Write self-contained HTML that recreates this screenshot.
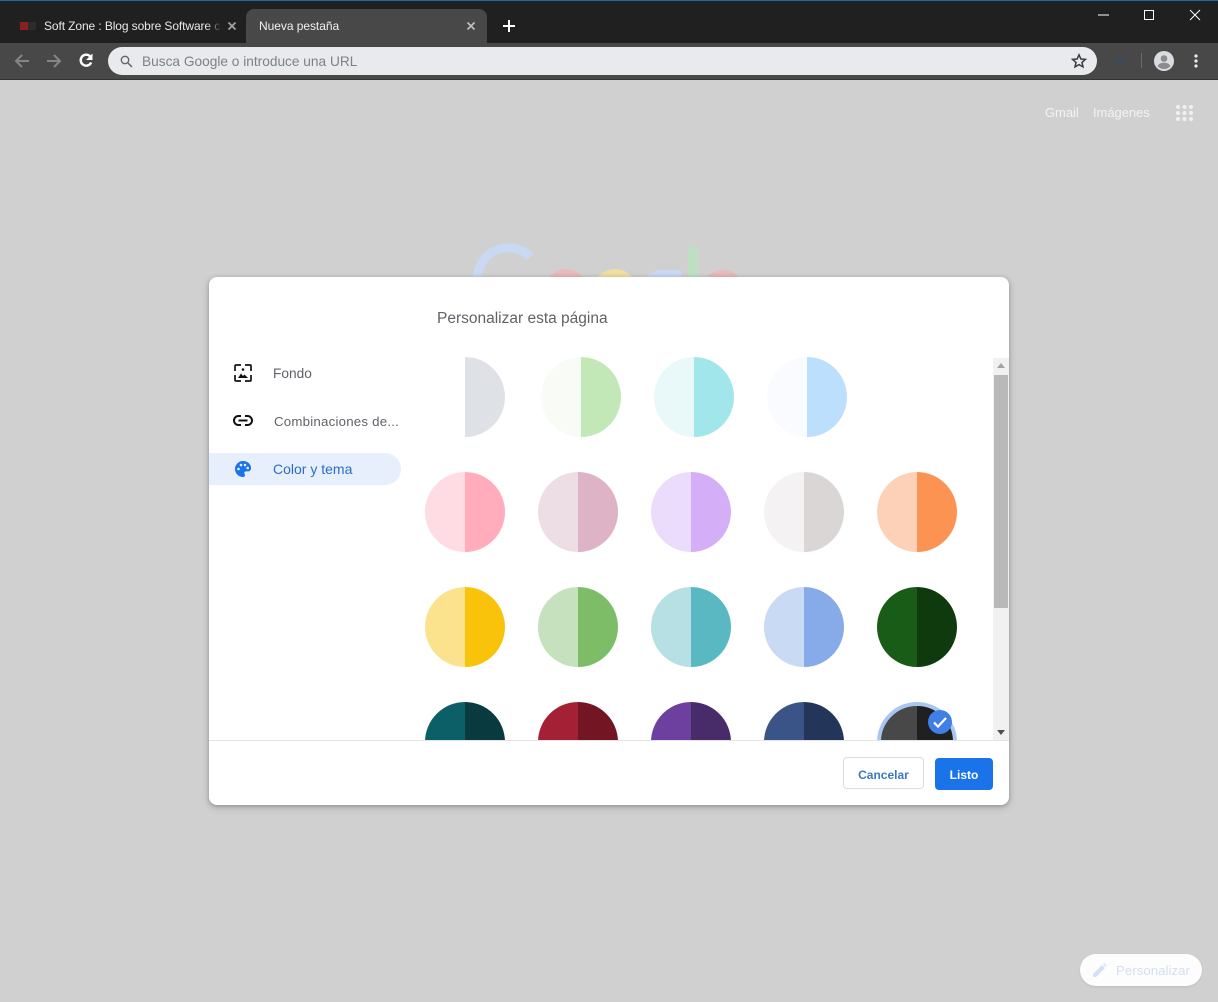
<!DOCTYPE html>
<html lang="es"><head><meta charset="utf-8"><title>Nueva pestaña</title>
<style>
html,body{margin:0;padding:0}
body{width:1218px;height:1002px;overflow:hidden;position:relative;background:#d0d0d0;font-family:"Liberation Sans",sans-serif}
.a{position:absolute;white-space:nowrap}
svg{position:absolute;overflow:visible}
.c{position:absolute;width:80px;height:80px;border-radius:50%}
</style></head><body>
<div class="a" style="left:0;top:0;width:1218px;height:44px;background:#202020"></div>
<div class="a" style="left:0;top:0;width:1218px;height:1px;background:#1c6aa8"></div>
<div class="a" style="left:0;top:43px;width:1218px;height:37px;background:#484848"></div>
<div class="a" style="left:0;top:79px;width:1218px;height:1px;background:#333"></div>
<div class="a" style="left:246px;top:9px;width:241px;height:35px;background:#484848;border-radius:8px 8px 0 0"></div>
<div class="a" style="left:20px;top:22px;width:8px;height:8px;background:#8a1f20"></div>
<div class="a" style="left:28px;top:22px;width:8px;height:8px;background:#2c2c2c"></div>
<div class="a" style="left:44px;top:18px;width:176px;overflow:hidden;font-size:12px;line-height:16px;letter-spacing:-.1px;color:#e8e8e8">Soft Zone : Blog sobre Software c</div>
<div class="a" style="left:206px;top:16px;width:16px;height:20px;background:linear-gradient(90deg,rgba(32,32,32,0),#202020)"></div>
<div class="a" style="left:259px;top:18px;font-size:12px;line-height:16px;letter-spacing:-.05px;color:#f0f0f0">Nueva pestaña</div>
<svg style="left:228px;top:22px" width="8" height="8"><path d="M.5.5l7 7M7.500.5l-7 7" stroke="#a8a8a8" stroke-width="1.600" fill="none"/></svg>
<svg style="left:467px;top:22px" width="8" height="8"><path d="M.5.5l7 7M7.500.5l-7 7" stroke="#c0c0c0" stroke-width="1.600" fill="none"/></svg>
<svg style="left:503px;top:20px" width="12" height="12"><path d="M6 0v12M0 6h12" stroke="#fff" stroke-width="2" fill="none"/></svg>
<svg style="left:1098px;top:14px" width="11" height="2"><path d="M0 1h11" stroke="#fff" stroke-width="1"/></svg>
<svg style="left:1144px;top:10px" width="10" height="10"><rect x=".5" y=".5" width="9" height="9" fill="none" stroke="#fff"/></svg>
<svg style="left:1190px;top:10px" width="10" height="10"><path d="M0 0l10 10M10 0L0 10" stroke="#fff" stroke-width="1" fill="none"/></svg>
<svg style="left:14px;top:53px" width="16" height="16"><path d="M15 8H2M8 2L2 8l6 6" stroke="#858585" stroke-width="2" fill="none"/></svg>
<svg style="left:46px;top:53px" width="16" height="16"><path d="M1 8h13M8 2l6 6-6 6" stroke="#858585" stroke-width="2" fill="none"/></svg>
<svg style="left:78px;top:52px" width="16" height="16" viewBox="0 0 16 16"><path d="M13.200 10.500A5.500 5.500 0 1 1 12 4.200" stroke="#fff" stroke-width="2.400" fill="none"/><path d="M14.500 1.500v6.500h-6.500z" fill="#fff"/></svg>
<div class="a" style="left:108px;top:47px;width:989px;height:28px;border-radius:14px;background:#e8eaed"></div>
<svg style="left:120px;top:55px" width="13" height="13"><circle cx="5" cy="5" r="3.700" stroke="#5f6368" stroke-width="1.300" fill="none"/><path d="M8 8l4 4" stroke="#5f6368" stroke-width="1.500"/></svg>
<div class="a" style="left:142px;top:54px;font-size:13.700px;line-height:16px;color:#7d8186">Busca Google o introduce una URL</div>
<svg style="left:1071px;top:53px" width="16" height="16" viewBox="0 0 16 16"><path d="M8 1.800l1.900 4.200 4.500.4-3.400 3 1 4.500L8 11.600l-4 2.300 1-4.500-3.400-3 4.500-.4z" fill="none" stroke="#3c3c3c" stroke-width="1.500"/></svg>
<svg style="left:1111px;top:53px" width="16" height="15" viewBox="0 0 16 15"><path d="M8 2L2 12h3l3-5 3 5h3z" fill="#3c4a5c"/></svg>
<div class="a" style="left:1141px;top:53px;width:1px;height:15px;background:#6a6a6a"></div>
<svg style="left:1154px;top:51px" width="20" height="20" viewBox="0 0 20 20"><circle cx="10" cy="10" r="10" fill="#dadce0"/><circle cx="10" cy="7.500" r="3.300" fill="#8a8c90"/><path d="M3.500 15c1.500-2.500 4-3.200 6.500-3.200s5 .7 6.500 3.200a8.500 8.500 0 0 1-13 0z" fill="#8a8c90"/></svg>
<svg style="left:1194px;top:54px" width="4" height="14"><circle cx="2" cy="2" r="1.600" fill="#eee"/><circle cx="2" cy="7" r="1.600" fill="#eee"/><circle cx="2" cy="12" r="1.600" fill="#eee"/></svg>
<div class="a" style="left:1045px;top:105px;font-size:13px;line-height:16px;letter-spacing:-.05px;color:#f3f3f3">Gmail</div>
<div class="a" style="left:1093px;top:105px;font-size:13px;line-height:16px;letter-spacing:-.05px;color:#f3f3f3">Imágenes</div>
<svg style="left:1176px;top:105px" width="17" height="16" fill="#f0f0f0"><circle cx="2" cy="2" r="2"/><circle cx="8.500" cy="2" r="2"/><circle cx="15" cy="2" r="2"/><circle cx="2" cy="8" r="2"/><circle cx="8.500" cy="8" r="2"/><circle cx="15" cy="8" r="2"/><circle cx="2" cy="14" r="2"/><circle cx="8.500" cy="14" r="2"/><circle cx="15" cy="14" r="2"/></svg>
<svg style="left:460px;top:238px" width="300" height="45">
<path d="M17 45C17 22 32 10 48 10c9 0 17 3 22 9" fill="none" stroke="#c9d8f3" stroke-width="9"/>
<circle cx="106" cy="53" r="22" fill="#e8baba"/>
<circle cx="155" cy="53" r="22" fill="#f1dea3"/>
<circle cx="202" cy="53" r="21" fill="#c9d8f3"/><rect x="205" y="32" width="17" height="10" rx="3" fill="#c9d8f3"/>
<rect x="228" y="9" width="10" height="36" fill="#bde0c3"/>
<circle cx="263" cy="53" r="21" fill="#e8baba"/>
</svg>
<div class="a" style="left:209px;top:277px;width:800px;height:528px;border-radius:8px;background:#fff;box-shadow:0 1px 4px rgba(60,64,67,.35),0 3px 8px rgba(60,64,67,.18);overflow:hidden">
<div class="a" style="left:228px;top:33px;font-size:15.500px;line-height:18px;color:#5f6368">Personalizar esta página</div>
<div class="a" style="left:0;top:176px;width:192px;height:32px;background:#e6effb;border-radius:0 16px 16px 0"></div>
<svg style="left:25px;top:87px" width="18" height="18" viewBox="0 0 18 18"><path d="M7 1H2a1 1 0 0 0-1 1v5M11 1h5a1 1 0 0 1 1 1v5M17 11v5a1 1 0 0 1-1 1h-5M7 17H2a1 1 0 0 1-1-1v-5" fill="none" stroke="#111" stroke-width="1.700"/><path d="M4 14l3-4.500 2 2.500 1.500-1.500L14 14z" fill="#111"/><circle cx="9" cy="5.500" r="1.300" fill="#111"/></svg>
<svg style="left:24px;top:138px" width="20" height="12" viewBox="0 0 20 12"><path d="M8 1H5.500a4.500 4.500 0 0 0 0 9H8M12 1h2.500a4.500 4.500 0 0 1 0 9H12M5.500 5.500h9" fill="none" stroke="#111" stroke-width="2"/></svg>
<svg style="left:25px;top:183px" width="18" height="18" viewBox="0 0 18 18"><path d="M9 1a8 8 0 0 0 0 16c1.300 0 2-.9 2-1.800 0-1-.7-1.300-.7-2.200 0-1 .8-1.600 1.800-1.600H14c2 0 3-1.500 3-3.400C17 3.800 13.400 1 9 1z" fill="#1a73e8"/><circle cx="4.500" cy="9" r="1.300" fill="#e6effb"/><circle cx="7" cy="5" r="1.300" fill="#e6effb"/><circle cx="11" cy="5" r="1.300" fill="#e6effb"/><circle cx="13.700" cy="8" r="1.300" fill="#e6effb"/></svg>
<div class="a" style="left:64px;top:89px;font-size:13.700px;line-height:16px;color:#5f6368">Fondo</div>
<div class="a" style="left:65px;top:137px;font-size:13.300px;line-height:16px;color:#5f6368;letter-spacing:.2px">Combinaciones de...</div>
<div class="a" style="left:64px;top:184px;font-size:14px;line-height:16px;color:#2a6dc9">Color y tema</div>
<div class="a" style="left:0;top:80px;width:784px;height:383px;overflow:hidden">
<div class="c" style="left:216px;top:0;background:linear-gradient(90deg,#fff 50%,#dee1e6 50%)"></div>
<div class="c" style="left:332px;top:0;background:linear-gradient(90deg,#f8fbf6 50%,#c2e8b8 50%)"></div>
<div class="c" style="left:445px;top:0;background:linear-gradient(90deg,#e9f8f9 50%,#a0e6ea 50%)"></div>
<div class="c" style="left:558px;top:0;background:linear-gradient(90deg,#f9fbfe 50%,#bcdffd 50%)"></div>
<div class="c" style="left:216px;top:115px;background:linear-gradient(90deg,#ffdce3 50%,#ffadbc 50%)"></div>
<div class="c" style="left:329px;top:115px;background:linear-gradient(90deg,#eddde4 50%,#deb3c5 50%)"></div>
<div class="c" style="left:442px;top:115px;background:linear-gradient(90deg,#ebdcfb 50%,#d4aff8 50%)"></div>
<div class="c" style="left:555px;top:115px;background:linear-gradient(90deg,#f4f2f2 50%,#dad6d5 50%)"></div>
<div class="c" style="left:668px;top:115px;background:linear-gradient(90deg,#fdd1b8 50%,#fc9353 50%)"></div>
<div class="c" style="left:216px;top:230px;background:linear-gradient(90deg,#fbe38e 50%,#f8c30a 50%)"></div>
<div class="c" style="left:329px;top:230px;background:linear-gradient(90deg,#c6e1bd 50%,#7dbd67 50%)"></div>
<div class="c" style="left:442px;top:230px;background:linear-gradient(90deg,#b6e0e4 50%,#59b8c2 50%)"></div>
<div class="c" style="left:555px;top:230px;background:linear-gradient(90deg,#c9daf5 50%,#86abe8 50%)"></div>
<div class="c" style="left:668px;top:230px;background:linear-gradient(90deg,#185c18 50%,#0e3a0e 50%)"></div>
<div class="c" style="left:216px;top:345px;background:linear-gradient(90deg,#0c5f66 50%,#083a40 50%)"></div>
<div class="c" style="left:329px;top:345px;background:linear-gradient(90deg,#a42035 50%,#731522 50%)"></div>
<div class="c" style="left:442px;top:345px;background:linear-gradient(90deg,#6d3f9e 50%,#482b69 50%)"></div>
<div class="c" style="left:555px;top:345px;background:linear-gradient(90deg,#3a5488 50%,#233558 50%)"></div>
<div class="c" style="left:668px;top:345px;box-sizing:border-box;border:4px solid #a9c6f1;background:linear-gradient(90deg,#484848 50%,#202020 50%)"></div>
<svg style="left:719px;top:353px" width="24" height="24"><circle cx="12" cy="12" r="12" fill="#3f7fe6"/><path d="M6 12.500l4 4 8-8.500" stroke="#fff" stroke-width="2.200" fill="none"/></svg>
</div>
<div class="a" style="left:784px;top:81px;width:16px;height:382px;background:#f1f1f1"></div>
<div class="a" style="left:785px;top:98px;width:14px;height:233px;background:#b9b9b9"></div>
<svg style="left:788px;top:86px" width="8" height="6"><path d="M4 0l4 5H0z" fill="#a3a3a3"/></svg>
<svg style="left:788px;top:453px" width="8" height="5"><path d="M0 0h8L4 5z" fill="#505050"/></svg>
<div class="a" style="left:0;top:463px;width:800px;height:1px;background:#e3e4e6"></div>
<div class="a" style="left:634px;top:480px;width:79px;height:30px;border:1px solid #dadce0;border-radius:4px;text-align:center;font-size:12px;font-weight:bold;line-height:34px;color:#3d78c4">Cancelar</div>
<div class="a" style="left:726px;top:481px;width:58px;height:32px;background:#1a73e8;border-radius:4px;text-align:center;font-size:12px;font-weight:bold;line-height:35px;color:#fff">Listo</div>
</div>
<div class="a" style="left:1080px;top:954px;width:122px;height:32px;border-radius:16px;background:#fdfdfd;box-shadow:0 1px 2px rgba(60,64,67,.12)"></div>
<svg style="left:1093px;top:963px" width="14" height="14" viewBox="0 0 14 14"><path d="M0 14v-3L9 2l3 3-9 9zM10 1l1-1 3 3-1 1z" fill="#d3e0f5"/></svg>
<div class="a" style="left:1116px;top:963px;font-size:13.300px;line-height:16px;color:#d3e0f0">Personalizar</div>
</body></html>
